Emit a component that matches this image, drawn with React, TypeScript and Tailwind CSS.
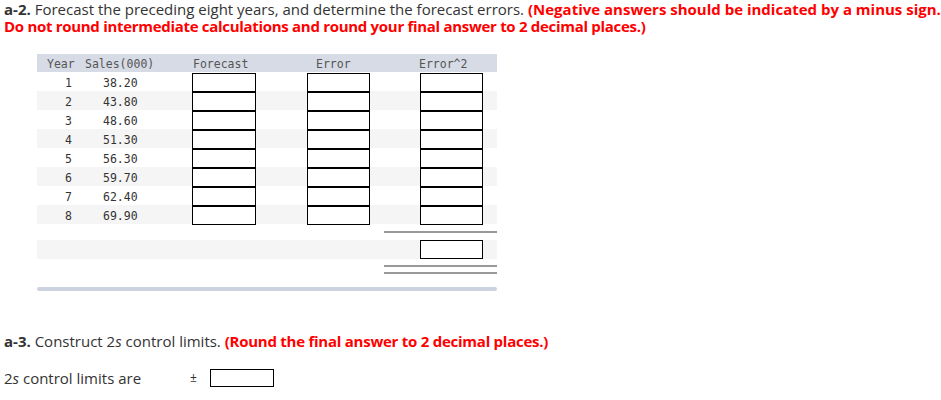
const years = [
  { y: 1, s: "38.20" },
  { y: 2, s: "43.80" },
  { y: 3, s: "48.60" },
  { y: 4, s: "51.30" },
  { y: 5, s: "56.30" },
  { y: 6, s: "59.70" },
  { y: 7, s: "62.40" },
  { y: 8, s: "69.90" },
];

const Box = ({ w }: { w: string }) => (
  <div className={`${w} h-[19px] border border-black bg-white`} />
);

const Question = ({ label, children }) => (
  <p className="text-[15px] leading-[17px] text-[#333]">
    <b>{label}</b> {children}
  </p>
);

export default function App() {
  return (
    <div className="w-[941px] h-[400px] bg-white font-['Open_Sans',sans-serif] text-[#333]">
      <div className="pl-[4px] pt-[1px]">
        <Question label="a-2.">
          Forecast the preceding eight years, and determine the forecast errors.{" "}
          <b className="text-[#ff0000]">(Negative answers should be indicated by a minus sign.</b>
          <br />
          <b className="text-[#ff0000] tracking-[-0.3px]">Do not round intermediate calculations and round your final answer to 2 decimal places.)</b>
        </Question>
      </div>

      <div className="ml-[37px] mt-[19px] w-[460px] font-['DejaVu_Sans_Mono',monospace] text-[11.5px]">
        <div className="grid grid-cols-[43px_85px_118px_101px_113px] h-[18px] items-center pt-[2px] bg-[#d6dbe5] text-[#555]">
          <span className="pl-[10px]">Year</span>
          <span className="pl-[5px]">Sales(000)</span>
          <span className="pl-[28px]">Forecast</span>
          <span className="pl-[33px]">Error</span>
          <span className="pl-[35px]">Error^2</span>
        </div>

        {years.map((r, i) => (
          <div
            key={r.y}
            className={`grid grid-cols-[43px_85px_118px_101px_113px] h-[19px] items-center ${i % 2 ? "bg-[#f5f5f5]" : "bg-white"}`}
          >
            <span className="pl-[28px] pt-[3px]">{r.y}</span>
            <span className="pl-[23px] pt-[3px]">{r.s}</span>
            <div className="pl-[27px] -mb-[1px]"><Box w="w-[64px]" /></div>
            <div className="pl-[24px] -mb-[1px]"><Box w="w-[63px]" /></div>
            <div className="pl-[36px] -mb-[1px]"><Box w="w-[63px]" /></div>
          </div>
        ))}

        <div className="h-[16px] flex justify-end items-center">
          <div className="w-[113px] h-[2px] bg-[#999]" />
        </div>
        <div className="h-[19px] bg-[#f5f5f5] flex justify-end">
          <div className="w-[113px] pl-[36px]"><Box w="w-[63px]" /></div>
        </div>
        <div className="flex justify-end pt-[6px]">
          <div className="w-[113px] flex flex-col gap-[5px]">
            <div className="h-[2px] bg-[#999]" />
            <div className="h-[2px] bg-[#999]" />
          </div>
        </div>
        <div className="mt-[13px] h-[4px] bg-[#ccd2e0] rounded-[2px]" />
      </div>

      <div className="pl-[4px] mt-[42px]">
        <Question label="a-3.">
          Construct 2<i>s</i> control limits.{" "}
          <b className="text-[#ff0000] tracking-[-0.25px]">(Round the final answer to 2 decimal places.)</b>
        </Question>
        <div className="flex items-center mt-[17px] text-[15px] text-[#333]">
          <span className="w-[186px]">
            2<i>s</i> control limits are
          </span>
          <span className="w-[20px] text-[12px]">±</span>
          <div className="w-[64px] h-[18px] border border-black" />
        </div>
      </div>
    </div>
  );
}
